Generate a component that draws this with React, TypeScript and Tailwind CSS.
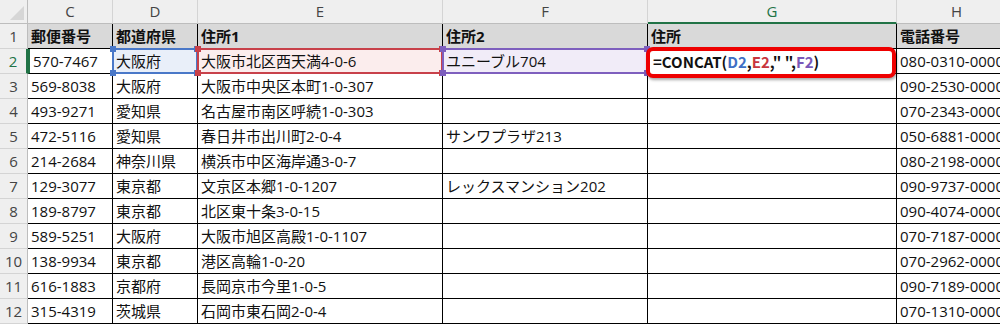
import React from "react"

type Row = [string, string, string, string, string]

// C, D, E, F, H (G is the formula column, empty except row 2)
const rows: Row[] = [
  ["570-7467", "大阪府", "大阪市北区西天満4-0-6", "ユニーブル704", "080-0310-0000"],
  ["569-8038", "大阪府", "大阪市中央区本町1-0-307", "", "090-2530-0000"],
  ["493-9271", "愛知県", "名古屋市南区呼続1-0-303", "", "070-2343-0000"],
  ["472-5116", "愛知県", "春日井市出川町2-0-4", "サンワプラザ213", "050-6881-0000"],
  ["214-2684", "神奈川県", "横浜市中区海岸通3-0-7", "", "080-2198-0000"],
  ["129-3077", "東京都", "文京区本郷1-0-1207", "レックスマンション202", "090-9737-0000"],
  ["189-8797", "東京都", "北区東十条3-0-15", "", "090-4074-0000"],
  ["589-5251", "大阪府", "大阪市旭区高殿1-0-1107", "", "070-7187-0000"],
  ["138-9934", "東京都", "港区高輪1-0-20", "", "070-2962-0000"],
  ["616-1883", "京都府", "長岡京市今里1-0-5", "", "090-7189-0000"],
  ["315-4319", "茨城県", "石岡市東石岡2-0-4", "", "070-1310-0000"],
]

const font = { fontFamily: '"Open Sans", "Noto Sans CJK JP", sans-serif' }
const formulaFont = { fontFamily: '"Noto Sans CJK JP", "Noto Sans", sans-serif' }

function ColHead({ label, active }: { label: string; active?: boolean }) {
  return (
    <div
      className={
        "h-[24px] flex items-center justify-center bg-[#efefef] border-r border-[#d4d4d4] text-[15px] " +
        (active ? "text-[#217346] border-b-2 border-b-[#217346]" : "text-[#444] border-b border-b-[#bdbdbd]")
      }
    >
      {label}
    </div>
  )
}

function RowHead({ n, active }: { n: number; active?: boolean }) {
  return (
    <div
      className={
        "h-[25px] flex items-center justify-center bg-[#efefef] border-b border-[#d4d4d4] text-[15px] " +
        (active ? "text-[#217346] border-r-2 border-r-[#217346]" : "text-[#444] border-r border-r-[#bdbdbd]")
      }
    >
      {n}
    </div>
  )
}

function Cell({ text, className = "" }: { text?: string; className?: string }) {
  return (
    <div
      className={
        "h-[25px] flex items-center pl-[3px] border-r border-b border-black text-[15px] text-[#111] whitespace-nowrap overflow-hidden " +
        className
      }
    >
      {text}
    </div>
  )
}

function Handle({ className }: { className: string }) {
  return <span className={"absolute w-[6px] h-[6px] " + className} />
}

function RefCell({ text, tone }: { text: string; tone: "blue" | "red" | "purple" }) {
  const c = {
    blue: { box: "border-[#4a78c8] bg-[#e9eff9]", dot: "bg-[#4a78c8]" },
    red: { box: "border-[#c8414a] bg-[#fbeded]", dot: "bg-[#c8414a]" },
    purple: { box: "border-[#7e5fbe] bg-[#f1ecf8]", dot: "bg-[#7e5fbe]" },
  }[tone]
  return (
    <div className="relative h-[25px] border-r border-b border-black">
      <div
        className={
          "absolute left-[-1px] top-[-1px] right-[-1px] bottom-[-1px] border-2 flex items-center pl-[2px] text-[15px] text-[#111] whitespace-nowrap " +
          c.box
        }
      >
        {text}
      </div>
      <Handle className={c.dot + " left-[-3px] top-[-3px]"} />
      <Handle className={c.dot + " right-[-3px] top-[-3px]"} />
      <Handle className={c.dot + " left-[-3px] bottom-[-3px]"} />
      <Handle className={c.dot + " right-[-3px] bottom-[-3px]"} />
    </div>
  )
}

export default function App() {
  return (
    <div className="w-[1000px] h-[325px] overflow-hidden bg-white" style={font}>
      <div className="grid grid-cols-[28px_85px_85px_245px_205px_249px_120px] w-[1017px]">
        {/* column letters */}
        <div className="relative h-[24px] bg-[#efefef] border-r border-b border-[#bdbdbd]">
          <svg className="absolute right-[3px] bottom-[3px]" width="14" height="14" viewBox="0 0 14 14">
            <polygon points="14,0 14,14 0,14" fill="#d6d6d6" />
          </svg>
        </div>
        <ColHead label="C" />
        <ColHead label="D" />
        <ColHead label="E" />
        <ColHead label="F" />
        <ColHead label="G" active />
        <ColHead label="H" />

        {/* row 1 headings */}
        <RowHead n={1} />
        {["郵便番号", "都道府県", "住所1", "住所2", "住所", "電話番号"].map((h, i) => (
          <Cell key={i} text={h} className="bg-[#d9d9d9] font-bold" />
        ))}

        {rows.map((r, i) => {
          const n = i + 2
          if (n === 2) {
            return (
              <React.Fragment key={n}>
                <RowHead n={n} active />
                <Cell text={r[0]} className="border-l-2 border-l-[#217346] pl-[1px]" />
                <RefCell text={r[1]} tone="blue" />
                <RefCell text={r[2]} tone="red" />
                <RefCell text={r[3]} tone="purple" />
                <div className="relative h-[25px] border-r border-b border-black">
                  <div
                    className="absolute left-[-2px] top-[-2px] w-[250px] h-[31px] rounded-[7px] border-[4px] border-[#ee0000] bg-white shadow-[1px_2px_3px_rgba(0,0,0,0.35)] flex items-center pl-[3px] text-[15px] font-bold whitespace-nowrap"
                    style={formulaFont}
                  >
                    <span className="text-[#111]">=CONCAT(</span>
                    <span className="text-[#3f6fc4]">D2</span>
                    <span className="text-[#111]">,</span>
                    <span className="text-[#c8363e]">E2</span>
                    <span className="text-[#111]">," ",</span>
                    <span className="text-[#7a58b8]">F2</span>
                    <span className="text-[#111]">)</span>
                  </div>
                </div>
                <Cell text={r[4]} />
              </React.Fragment>
            )
          }
          return (
            <React.Fragment key={n}>
              <RowHead n={n} />
              <Cell text={r[0]} />
              <Cell text={r[1]} />
              <Cell text={r[2]} />
              <Cell text={r[3]} />
              <Cell />
              <Cell text={r[4]} />
            </React.Fragment>
          )
        })}
      </div>
    </div>
  )
}
